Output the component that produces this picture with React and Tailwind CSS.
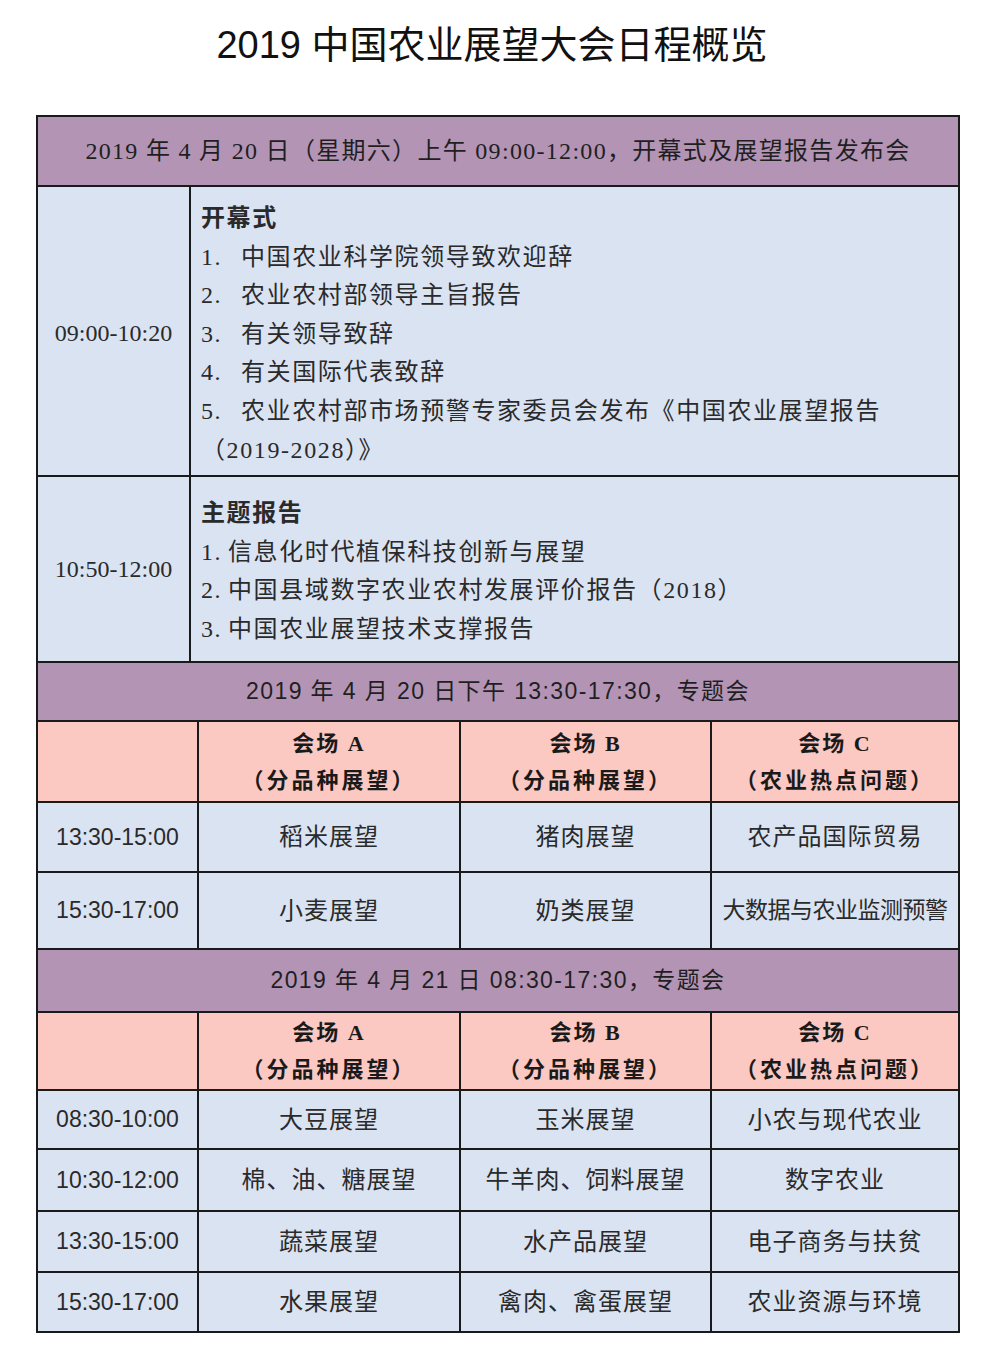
const serif = { fontFamily: '"Liberation Serif", "Noto Sans CJK SC", serif' };
const sans = { fontFamily: '"Liberation Sans", "Noto Sans CJK SC", sans-serif' };

const day1 = [
  { time: '13:30-15:00', a: '稻米展望', b: '猪肉展望', c: '农产品国际贸易', h: 'h-[70px]' },
  { time: '15:30-17:00', a: '小麦展望', b: '奶类展望', c: '大数据与农业监测预警', h: 'h-[77px]', tight: true },
];

const day2 = [
  { time: '08:30-10:00', a: '大豆展望', b: '玉米展望', c: '小农与现代农业', h: 'h-[59px]' },
  { time: '10:30-12:00', a: '棉、油、糖展望', b: '牛羊肉、饲料展望', c: '数字农业', h: 'h-[62px]' },
  { time: '13:30-15:00', a: '蔬菜展望', b: '水产品展望', c: '电子商务与扶贫', h: 'h-[61px]' },
  { time: '15:30-17:00', a: '水果展望', b: '禽肉、禽蛋展望', c: '农业资源与环境', h: 'h-[60px]' },
];

const venues = [
  { name: '会场 A', sub: '（分品种展望）' },
  { name: '会场 B', sub: '（分品种展望）' },
  { name: '会场 C', sub: '（农业热点问题）' },
];

const cols = 'grid grid-cols-[159px_262px_251px_248px]';

// 紫色标题行
const BandRow = ({ children, h, font = sans }) => (
  <div
    className={`${h} border-t-2 border-[#1a1a1a] bg-[#b394b5] flex items-center justify-center text-[23px] tracking-[1.4px] text-[#1f1f1f]`}
    style={font}
  >
    {children}
  </div>
);

const VenueHeader = ({ h }) => (
  <div className={`${cols} ${h} border-t-2 border-[#1a1a1a] bg-[#fbc8c2]`}>
    <div />
    {venues.map((v) => (
      <div
        key={v.name}
        className="border-l-2 border-[#1a1a1a] flex flex-col items-center justify-center font-bold text-[22px] leading-[37px] text-[#1a1a1a]"
        style={serif}
      >
        <span className="tracking-[2px]">{v.name}</span>
        <span className="tracking-[3px]">{v.sub}</span>
      </div>
    ))}
  </div>
);

const SlotRow = ({ row }) => (
  <div className={`${cols} ${row.h} border-t-2 border-[#1a1a1a] bg-[#dae3f2] text-[#2a2a2a]`} style={sans}>
    <div className="flex items-center justify-center text-[23px]">{row.time}</div>
    <div className="border-l-2 border-[#1a1a1a] flex items-center justify-center text-[24px] tracking-[1px]">{row.a}</div>
    <div className="border-l-2 border-[#1a1a1a] flex items-center justify-center text-[24px] tracking-[1px]">{row.b}</div>
    <div
      className={`border-l-2 border-[#1a1a1a] flex items-center justify-center ${row.tight ? 'text-[23px] tracking-[-0.5px]' : 'text-[24px] tracking-[1px]'}`}
    >
      {row.c}
    </div>
  </div>
);

const ListLine = ({ num, w, children }) => (
  <div className="flex leading-[38.6px]">
    <span className="shrink-0" style={{ width: w }}>{num}</span>
    <span>{children}</span>
  </div>
);

export default function App() {
  return (
    <div className="w-[984px] min-h-[1360px] bg-white pb-[27px]">
      {/* 标题 */}
      <div className="pt-[20px] pb-[45px] text-center">
        <h1
          className="text-[38px] leading-[50px] text-[#111]"
          style={{ fontFamily: '"Liberation Sans", "Noto Sans CJK SC", sans-serif' }}
        >
          2019 中国农业展望大会日程概览
        </h1>
      </div>

      <div className="ml-[36px] w-[924px] border-2 border-[#1a1a1a]">
        {/* 4月20日上午 */}
        <div
          className="h-[68px] bg-[#b394b5] flex items-center justify-center text-[24px] tracking-[1.3px] text-[#1f1f1f]"
          style={serif}
        >
          2019 年 4 月 20 日（星期六）上午 09:00-12:00，开幕式及展望报告发布会
        </div>

        <div className="flex h-[290px] border-t-2 border-[#1a1a1a] bg-[#dae3f2] text-[#2a2a2a]" style={serif}>
          <div className="w-[151px] shrink-0 flex items-center justify-center text-[24px] pt-[4px]">09:00-10:20</div>
          <div className="flex-1 border-l-2 border-[#1a1a1a] pl-[10px] pt-[12px] text-[24px] tracking-[1.6px]">
            <div className="font-bold leading-[38.6px]">开幕式</div>
            <ListLine num="1." w="40px">中国农业科学院领导致欢迎辞</ListLine>
            <ListLine num="2." w="40px">农业农村部领导主旨报告</ListLine>
            <ListLine num="3." w="40px">有关领导致辞</ListLine>
            <ListLine num="4." w="40px">有关国际代表致辞</ListLine>
            <ListLine num="5." w="40px">农业农村部市场预警专家委员会发布《中国农业展望报告</ListLine>
            <div className="leading-[38.6px]">（2019-2028）》</div>
          </div>
        </div>

        <div className="flex h-[186px] border-t-2 border-[#1a1a1a] bg-[#dae3f2] text-[#2a2a2a]" style={serif}>
          <div className="w-[151px] shrink-0 flex items-center justify-center text-[24px]">10:50-12:00</div>
          <div className="flex-1 border-l-2 border-[#1a1a1a] pl-[10px] pt-[17px] text-[24px] tracking-[1.6px]">
            <div className="font-bold leading-[38.6px]">主题报告</div>
            <ListLine num="1." w="27px">信息化时代植保科技创新与展望</ListLine>
            <ListLine num="2." w="27px">中国县域数字农业农村发展评价报告（2018）</ListLine>
            <ListLine num="3." w="27px">中国农业展望技术支撑报告</ListLine>
          </div>
        </div>

        {/* 4月20日下午 */}
        <BandRow h="h-[59px]">2019 年 4 月 20 日下午 13:30-17:30，专题会</BandRow>
        <VenueHeader h="h-[81px]" />
        {day1.map((row) => (
          <SlotRow key={row.time} row={row} />
        ))}

        {/* 4月21日 */}
        <BandRow h="h-[63px]">2019 年 4 月 21 日 08:30-17:30，专题会</BandRow>
        <VenueHeader h="h-[78px]" />
        {day2.map((row) => (
          <SlotRow key={row.time} row={row} />
        ))}
      </div>
    </div>
  );
}
